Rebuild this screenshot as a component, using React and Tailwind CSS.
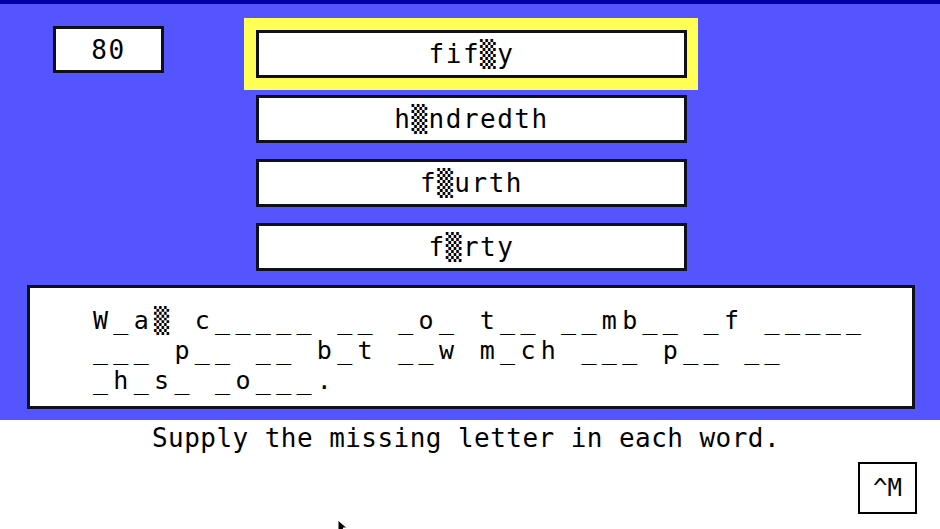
import React from "react";

const mono = { fontFamily: '"DejaVu Sans Mono", "Liberation Mono", monospace' };

const words = ["fif▒y", "h▒ndredth", "f▒urth", "f▒rty"];

const puzzle = [
  "W_a▒ c_____ __ _o_ t__ __mb__ _f _____",
  "___ p__ __ b_t __w m_ch ___ p__ __",
  "_h_s_ _o___.",
];

const WordBox = ({ text }) => (
  <div className="h-[48px] w-[431px] bg-white border-[3px] border-[#101018] flex items-center justify-center text-[26px] leading-none tracking-[1.5px] text-black">
    {text}
  </div>
);

const App = () => {
  return (
    <div className="w-[940px] h-[529px] bg-white flex flex-col overflow-hidden relative" style={mono}>
      {/* top strip */}
      <div className="h-[4px] bg-[#0000a8]" />

      {/* blue play area */}
      <div className="h-[416px] bg-[#5555ff] flex flex-col pt-[14px] pl-[27px]">
        <div className="flex">
          <div className="ml-[26px] mt-[8px] w-[111px] h-[47px] bg-white border-[3px] border-[#101018] flex items-center justify-center text-[26px] leading-none tracking-[1.5px] text-black">
            80
          </div>
          <div className="ml-[80px] flex flex-col">
            <div className="bg-[#ffff55] p-[12px] w-[454px]">
              <WordBox text={words[0]} />
            </div>
            <div className="flex flex-col gap-[16px] pl-[12px] mt-[5px]">
              {words.slice(1).map((w) => (
                <WordBox key={w} text={w} />
              ))}
            </div>
          </div>
        </div>

        <div className="mt-[14px] w-[888px] h-[124px] bg-white border-[3px] border-[#101018] pl-[63px] pt-[18px] text-black text-[25px] leading-[30px] tracking-[5.3px]">
          {puzzle.map((line, i) => (
            <div key={i} className="whitespace-pre">
              {line}
            </div>
          ))}
        </div>
      </div>

      {/* instructions */}
      <div className="pl-[152px] pt-[4px] text-[26px] leading-[28px] tracking-[0.45px] text-black whitespace-pre">
        Supply the missing letter in each word.
      </div>

      <div className="flex justify-end pr-[23px] mt-[10px]">
        <div className="w-[59px] h-[52px] border-2 border-black flex items-center justify-center text-[24px] text-black">
          ^M
        </div>
      </div>

      {/* mouse pointer peeking in at the bottom */}
      <svg className="absolute left-[337px] top-[519px]" width="12" height="14" viewBox="0 0 12 14">
        <path d="M1 1 L1 13 L4 10 L7 14 L9 13 L6 9 L10 9 Z" fill="black" stroke="white" strokeWidth="1" />
      </svg>
    </div>
  );
};

export default App;
